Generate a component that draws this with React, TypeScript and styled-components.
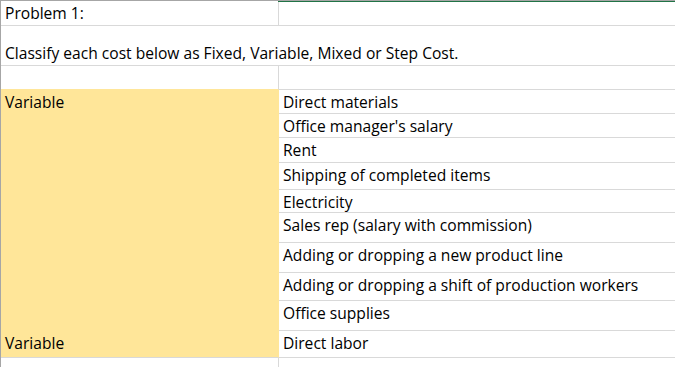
import React from "react";
import styled, { createGlobalStyle } from "styled-components";

const Global = createGlobalStyle`
  html, body { margin: 0; padding: 0; background: #ffffff; }
  body { font-family: "Open Sans", Lato, "Liberation Sans", sans-serif; }
`;

const GRID = "#d9d9d9";
const YELLOW = "#ffe699";

const Sheet = styled.div`
  position: relative;
  width: 675px;
  height: 367px;
  overflow: hidden;
  border-top: 1px solid #a6a6a6;
  border-left: 1px solid #a6a6a6;
  box-sizing: border-box;
  background: #fff;
`;

const SelBar = styled.div`
  position: absolute;
  top: -1px;
  left: 277px;
  right: 0;
  height: 2px;
  background: #217346;
`;

const Row = styled.div<{ $h: number }>`
  display: grid;
  grid-template-columns: 278px 1fr;
  height: ${(p) => p.$h}px;
`;

const Cell = styled.div<{
  $fill?: boolean;
  $noRight?: boolean;
  $yellowBottom?: boolean;
  $span?: boolean;
  $bottom?: boolean;
}>`
  box-sizing: border-box;
  display: flex;
  align-items: ${(p) => (p.$bottom ? "flex-end" : "flex-start")};
  padding: ${(p) => (p.$bottom ? "0 0 3px 4px" : "3px 0 0 4px")};
  font-size: 15.6px;
  line-height: 18px;
  color: #000;
  white-space: nowrap;
  background: ${(p) => (p.$fill ? YELLOW : "transparent")};
  border-bottom: 1px solid ${(p) => (p.$yellowBottom ? YELLOW : GRID)};
  border-right: ${(p) => (p.$noRight ? "none" : `1px solid ${p.$fill ? YELLOW : GRID}`)};
  grid-column: ${(p) => (p.$span ? "1 / span 2" : "auto")};
`;

type Item = { h: number; left?: string; right?: string };

const items: Item[] = [
  { h: 24, left: "Variable", right: "Direct materials" },
  { h: 24, right: "Office manager's salary" },
  { h: 25, right: "Rent" },
  { h: 27, right: "Shipping of completed items" },
  { h: 23, right: "Electricity" },
  { h: 30, right: "Sales rep (salary with commission)" },
  { h: 30, right: "Adding or dropping a new product line" },
  { h: 28, right: "Adding or dropping a shift of production workers" },
  { h: 30, right: "Office supplies" },
  { h: 27, left: "Variable", right: "Direct labor" },
];

export default function App() {
  return (
    <>
      <Global />
      <Sheet>
        <SelBar />
        <Row $h={25}>
          <Cell>Problem 1:</Cell>
          <Cell $noRight />
        </Row>
        <Row $h={40}>
          <Cell $span $noRight $bottom>
            Classify each cost below as Fixed, Variable, Mixed or Step Cost.
          </Cell>
        </Row>
        <Row $h={24}>
          <Cell $yellowBottom />
          <Cell $noRight />
        </Row>
        {items.map((it, i) => (
          <Row key={i} $h={it.h}>
            <Cell $fill $yellowBottom={i < items.length - 1}>{it.left}</Cell>
            <Cell $noRight>{it.right}</Cell>
          </Row>
        ))}
        <Row $h={20}>
          <Cell />
          <Cell $noRight />
        </Row>
      </Sheet>
    </>
  );
}
